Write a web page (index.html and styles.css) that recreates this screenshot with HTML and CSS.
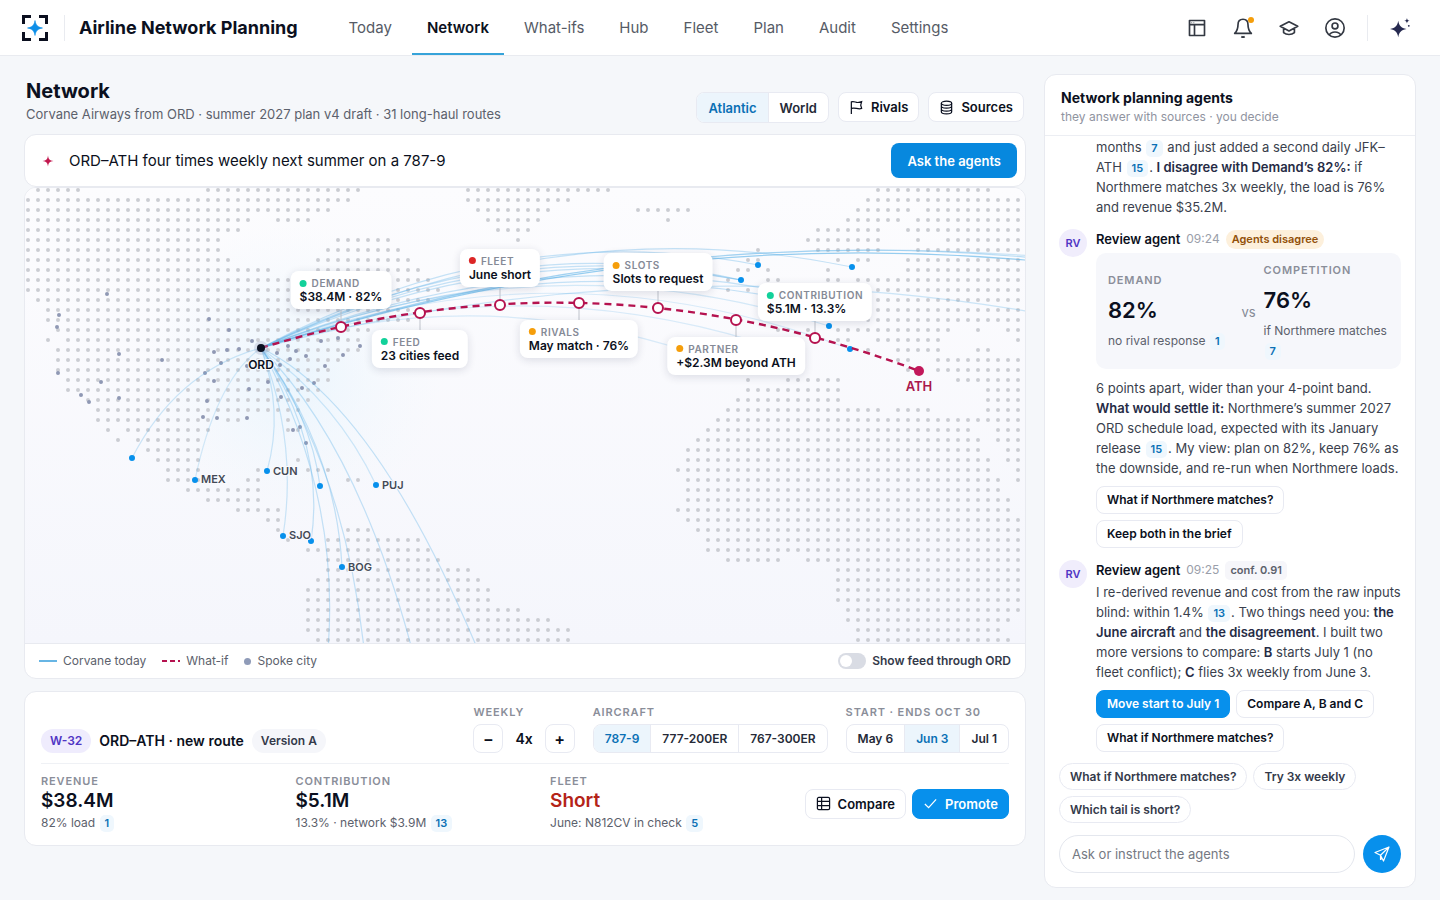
FILE: index.html
```html
<!DOCTYPE html>
<html lang="en">
<head>
<meta charset="utf-8">
<title>Airline Network Planning</title>
<link rel="stylesheet" href="styles.css">
</head>
<body>
<header class="topbar">
  <svg class="logo" viewBox="0 0 28 28" aria-hidden="true"><path d="M2.500 10V2.500H10M18 2.500h7.500V10M25.500 18v7.500H18M10 25.500H2.500V18" fill="none" stroke="#0b0f1f" stroke-width="3"/><path d="M14 6.500c.9 4.800 2.700 6.600 7.500 7.500-4.800.9-6.600 2.700-7.500 7.500-.9-4.800-2.700-6.600-7.500-7.500 4.800-.9 6.600-2.700 7.500-7.500z" fill="#0c8ee8" stroke="#0c8ee8" stroke-width=".6"/></svg>
  <span class="rule"></span>
  <span class="brand">Airline Network Planning</span>
  <nav class="nav" aria-label="Main">
    <a href="#">Today</a><a href="#" class="active" aria-current="page">Network</a><a href="#">What-ifs</a><a href="#">Hub</a><a href="#">Fleet</a><a href="#">Plan</a><a href="#">Audit</a><a href="#">Settings</a>
  </nav>
  <div class="tools">
    <button class="tool" aria-label="Layout"><svg viewBox="0 0 24 24"><path d="M3 3h18v18H3zM3 8h18M9 8v13"/><path d="M5.500 5.500h.6M8 5.500h.6" stroke-width="1.400"/></svg></button>
    <button class="tool" aria-label="Notifications"><svg viewBox="0 0 24 24"><path d="M12 1.500c-4 0-6 2.800-6 6.500 0 4.500-1 7.500-4 10.500h20c-3-3-4-6-4-10.500 0-3.700-2-6.500-6-6.500z"/><path d="M10 22.200c1.200 1 2.800 1 4 0"/></svg><span class="alert"></span></button>
    <button class="tool" aria-label="Learning"><svg viewBox="0 0 24 24"><path d="M12 4.500 1.500 10 12 15.500 22.500 10zM5.500 12.200v5.300c3.500 3 9.500 3 13 0v-5.300"/></svg></button>
    <button class="tool" aria-label="Account"><svg viewBox="0 0 24 24"><circle cx="12" cy="12" r="11"/><circle cx="12" cy="9.500" r="3.500"/><path d="M5 20.500c2.500-5 11.500-5 14 0"/></svg></button>
    <span class="rule"></span>
    <button class="tool spark" aria-label="Assistant"><svg viewBox="0 0 24 24"><path d="M9 3c1 5.600 2.900 7.700 9 9-6.100 1.300-8 3.400-9 9-1-5.600-2.900-7.700-9-9 6.100-1.300 8-3.400 9-9z"/><path d="M18.500 0c.4 2 1 2.600 3 3-2 .4-2.600 1-3 3-.4-2-1-2.600-3-3 2-.4 2.600-1 3-3z"/><circle cx="20.500" cy="8.500" r="1"/></svg></button>
  </div>
</header>

<main class="page">
  <section class="left">
    <div class="heading">
      <div>
        <h1>Network</h1>
        <p class="sub">Corvane Airways from ORD · summer 2027 plan v4 draft · 31 long-haul routes</p>
      </div>
      <div class="filters">
        <div class="segment large"><button class="on">Atlantic</button><button>World</button></div>
        <button class="btn"><svg viewBox="0 0 16 16"><path d="M2.500 15V2c3-1.500 5 1.500 8 .5l3-.8-1 3.800 1 3.500c-4 1.500-7-1.500-11 0"/></svg>Rivals</button>
        <button class="btn"><svg viewBox="0 0 16 16"><ellipse cx="8" cy="3.500" rx="5.500" ry="2.300"/><path d="M2.500 3.500v9c0 3 11 3 11 0v-9M2.500 6.500c0 3 11 3 11 0M2.500 9.500c0 3 11 3 11 0"/></svg>Sources</button>
      </div>
    </div>

    <form class="ask">
      <svg viewBox="0 0 12 12" aria-hidden="true"><path d="M6 .5c.5 3.900 1.600 5 5.500 5.500-3.900.5-5 1.600-5.500 5.500C5.500 7.600 4.400 6.500.5 6 4.400 5.500 5.500 4.400 6 .5z"/></svg>
      <input type="text" aria-label="Route idea" value="ORD–ATH four times weekly next summer on a 787-9">
      <button type="button">Ask the agents</button>
    </form>

    <div class="mapcard">
      <div class="map">
        <svg class="chart" viewBox="25 188 1000 455" role="img" aria-label="Route map from ORD">
          <defs><radialGradient id="glow" gradientUnits="userSpaceOnUse" cx="290" cy="375" r="150"><stop offset="0" stop-color="#e0f2fd" stop-opacity=".6"/><stop offset="1" stop-color="#eef8fe" stop-opacity="0"/></radialGradient></defs>
          <circle cx="290" cy="375" r="150" fill="url(#glow)"/>
          <path id="land" class="land"/>
          <path id="spokes" class="spokes"/>
          <g id="routes" class="routes"></g>
          <path id="cities" class="cities"/>
          <path class="stems" d="M341 310v13M420 317v13M500 288v13M579 307v13M658 291v13M736 324v13M815 321v13"/>
          <path class="whatif" d="M261 348Q590 247 919 371"/>
          <g class="nodes"><circle cx="341" cy="327" r="5"/><circle cx="420" cy="313" r="5"/><circle cx="500" cy="305" r="5"/><circle cx="579" cy="303" r="5"/><circle cx="658" cy="308" r="5"/><circle cx="736" cy="320" r="5"/><circle cx="815" cy="338" r="5"/></g>
          <circle cx="261" cy="348" r="7" class="halo"/><circle cx="261" cy="348" r="4" class="hub"/>
          <circle cx="919" cy="371" r="5" class="dest"/>
          <g class="names"><text x="201" y="483">MEX</text><text x="273" y="475">CUN</text><text x="382" y="489">PUJ</text><text x="289" y="539">SJO</text><text x="348" y="571">BOG</text></g>
          <text class="hubname" x="261" y="369">ORD</text>
          <text class="destname" x="919" y="391">ATH</text>
        </svg>
        <div class="tag t1"><span class="ok">DEMAND</span><b>$38.4M · 82%</b></div>
        <div class="tag t2"><span class="ok">FEED</span><b>23 cities feed</b></div>
        <div class="tag t3"><span class="bad">FLEET</span><b>June short</b></div>
        <div class="tag t4"><span class="warn">RIVALS</span><b>May match · 76%</b></div>
        <div class="tag t5"><span class="warn">SLOTS</span><b>Slots to request</b></div>
        <div class="tag t6"><span class="warn">PARTNER</span><b>+$2.3M beyond ATH</b></div>
        <div class="tag t7"><span class="ok">CONTRIBUTION</span><b>$5.1M · 13.3%</b></div>
      </div>
      <div class="legend">
        <span class="key line">Corvane today</span>
        <span class="key dash">What-if</span>
        <span class="key dot">Spoke city</span>
        <label class="switch"><input type="checkbox">Show feed through ORD</label>
      </div>
    </div>

    <div class="plan">
      <div class="planhead">
        <div class="ident"><span class="pill violet">W-32</span><h2>ORD–ATH · new route</h2><span class="pill">Version A</span></div>
        <div class="field"><span class="cap">Weekly</span><div class="stepper"><button aria-label="Fewer">−</button><b>4x</b><button aria-label="More">+</button></div></div>
        <div class="field"><span class="cap">Aircraft</span><div class="segment"><button class="on">787-9</button><button>777-200ER</button><button>767-300ER</button></div></div>
        <div class="field"><span class="cap">Start · ends Oct 30</span><div class="segment"><button>May 6</button><button class="on">Jun 3</button><button>Jul 1</button></div></div>
      </div>
      <div class="metrics">
        <div><span class="cap">Revenue</span><strong>$38.4M</strong><p>82% load <a class="ref" href="#">1</a></p></div>
        <div><span class="cap">Contribution</span><strong>$5.1M</strong><p>13.3% · network $3.9M <a class="ref" href="#">13</a></p></div>
        <div><span class="cap">Fleet</span><strong class="short">Short</strong><p>June: N812CV in check <a class="ref" href="#">5</a></p></div>
        <div class="actions">
          <button class="btn"><svg viewBox="0 0 16 16"><rect x="1.500" y="1.500" width="13" height="13" rx="1.500"/><path d="M1.500 5.800h13M1.500 10.200h13M6 1.500v13"/></svg>Compare</button>
          <button class="btn primary"><svg viewBox="0 0 16 16"><path d="m2 8.500 4 4 8-9"/></svg>Promote</button>
        </div>
      </div>
    </div>
  </section>

  <aside class="agents">
    <div class="agenthead"><h2>Network planning agents</h2><p>they answer with sources · you decide</p></div>
    <div class="feed">
      <article class="msg"><div class="body"><p>months <a class="ref" href="#">7</a> and just added a second daily JFK–ATH <a class="ref" href="#">15</a>. <b>I disagree with Demand’s 82%:</b> if Northmere matches 3x weekly, the load is 76% and revenue $35.2M.</p></div></article>
      <article class="msg">
        <span class="avatar">RV</span>
        <div class="body">
          <div class="who"><b>Review agent</b><time>09:24</time><span class="badge amber">Agents disagree</span></div>
          <div class="versus">
            <div><span class="cap">Demand</span><strong>82%</strong><p>no rival response <a class="ref" href="#">1</a></p></div>
            <span class="vs">vs</span>
            <div><span class="cap">Competition</span><strong>76%</strong><p>if Northmere matches <a class="ref" href="#">7</a></p></div>
          </div>
          <p>6 points apart, wider than your 4-point band. <b>What would settle it:</b> Northmere’s summer 2027 ORD schedule load, expected with its January release <a class="ref" href="#">15</a>. My view: plan on 82%, keep 76% as the downside, and re-run when Northmere loads.</p>
          <div class="choices"><button>What if Northmere matches?</button><button>Keep both in the brief</button></div>
        </div>
      </article>
      <article class="msg">
        <span class="avatar">RV</span>
        <div class="body">
          <div class="who"><b>Review agent</b><time>09:25</time><span class="badge">conf. 0.91</span></div>
          <p>I re-derived revenue and cost from the raw inputs blind: within 1.4% <a class="ref" href="#">13</a>. Two things need you: <b>the June aircraft</b> and <b>the disagreement</b>. I built two more versions to compare: <b>B</b> starts July 1 (no fleet conflict); <b>C</b> flies 3x weekly from June 3.</p>
          <div class="choices"><button class="primary">Move start to July 1</button><button>Compare A, B and C</button><button>What if Northmere matches?</button></div>
        </div>
      </article>
    </div>
    <div class="prompts"><button>What if Northmere matches?</button><button>Try 3x weekly</button><button>Which tail is short?</button></div>
    <form class="composer"><input type="text" aria-label="Message" placeholder="Ask or instruct the agents"><button type="button" aria-label="Send"><svg viewBox="0 0 16 16"><path d="M15 1 1 6.500l5.500 2.700L9.500 15zM15 1 6.500 9.200v4.300l1.800-1.800"/></svg></button></form>
  </aside>
</main>
<script src="map.js"></script>
</body>
</html>
```

FILE: map.js
```js
// Land mask: one entry per grid row, inclusive column runs.
const rows = [
  "1-5 18-33 44-58 85-96", "0-32 44-54 84-99", "0-30 45-52 61-66 83-88 90-99", "0-22 25-28 46-51 64 82-87 89-99",
  "0-21 47-50 79-85 88-99", "0-19 31-36 49 78-85 89 92-99", "0-19 30-37 73 79-85 89-99", "0-20 29-38 72-73 81 83-84 88-99",
  "0-24 29-39 71-72 74 80 88-99", "0-40 70 74-75 80-81 83-99", "0-41 70 72 85-99", "1-40 85-99",
  "2-38 85-99", "2-38 84-99", "3-34 75-76 78 81-92 95 98-99", "2 4-33 81-82 85-91 99",
  "3-33 84 87-91 95-96", "3-31 87-88 91-99", "3-30 88 91-99", "4-30 72 76-81 93-99",
  "4-29 72-81 96-99", "6-28 71-81 96-99", "7-27 70-85 87-90 96-99", "7-18 20-21 26 69-99",
  "8 10-18 26-27 68-94 97-99", "9 11-17 67-95 97-99", "12-17 66-95 98-99", "13-17 27 66-96 98-99",
  "14-17 23 28-30 65-96 99", "14-17 22-23 32-33 66-97 99", "16-23 66-97", "18-23 66-98",
  "21-25 65-98", "24-25 66-99", "25 32-34 67-99", "26 30-39 68-99",
  "28-40 68-99", "30-41 70-75 78-99", "30-44 81-99", "29-45 81-99",
  "28-46 81-99", "28-46 81-99", "28-49 82-99", "28-52 82-98",
  "28-54 83-97", "29-54 83-98"
];
const spokes = [[107,294],[59,315],[57,327],[209,319],[229,330],[119,354],[162,360],[214,352],[227,350],[239,349],[252,341],[221,363],[205,373],[214,381],[58,373],[101,382],[81,395],[89,402],[119,398],[207,401],[247,366],[249,389],[268,382],[281,397],[277,353],[280,365],[290,359],[288,346],[296,351],[306,356],[338,338],[321,341],[325,366],[343,355],[360,346],[314,383],[302,388],[203,417],[217,418],[247,418],[293,430],[300,427],[306,443]];
const cities = [[132,458],[195,480],[267,471],[320,486],[376,485],[283,536],[311,541],[342,567],[758,265],[741,280],[852,267],[829,326],[850,349]];
// Control point and end point of each arc, then its opacity.
const routes = [
  [556,206,852,267,.35],[510,216,758,265,.35],[501,226,741,280,.35],[501,232,741,280,.35],[501,238,741,280,.35],[520,243,775,290,.35],[510,250,770,296,.35],
  [705,207,1150,275,.65],[705,204,1150,272,.4],[660,216,1100,262,.3],[680,237,1100,325,.3],[545,235,829,326,.25],[555,238,850,349,.22],[509,267,757,342,.22],[475,282,690,352,.22],
  [177,371,132,458,.3],[216,380,195,480,.25],[284,411,267,471,.3],[298,442,283,536,.3],[326,445,311,541,.35],[311,415,320,486,.35],[336,450,342,567,.35],[338,404,376,485,.28],
  [358,525,318,720,.35],[364,495,370,740,.35],[382,470,437,760,.35],[398,414,520,760,.35]
];
const dots = list => list.map(([x, y]) => `M${x} ${y}h0`).join("");
const land = [];
rows.forEach((row, r) => row.split(" ").forEach(run => {
  const [a, b = a] = run.split("-").map(Number);
  for (let k = a; k <= b; k++) land.push([28 + 10 * k, 190 + 10 * r]);
}));
document.getElementById("land").setAttribute("d", dots(land));
document.getElementById("spokes").setAttribute("d", dots(spokes));
document.getElementById("cities").setAttribute("d", dots(cities));
document.getElementById("routes").innerHTML = routes.map(([cx, cy, x, y, o]) => `<path d="M261 348Q${cx} ${cy} ${x} ${y}" opacity="${o}"/>`).join("");
```

FILE: styles.css
```css
* { box-sizing: border-box; }
body { margin: 0; min-height: 100vh; display: flex; flex-direction: column; background: #f5f7fa; color: #0b1020; font: 13px/20px Inter, "Liberation Sans", sans-serif; }
h1, h2, p { margin: 0; }
button, input { font: inherit; color: inherit; }
button { cursor: pointer; }
a { text-decoration: none; }

.topbar { display: flex; align-items: center; height: 56px; padding: 0 28px 0 21px; background: #fff; border-bottom: 1px solid #e9ebf0; }
.logo { width: 28px; height: 28px; }
.rule { width: 1px; height: 26px; background: #e9ebf0; }
.logo + .rule { margin: 0 14px 0 15px; }
.brand { font-size: 18px; font-weight: 700; line-height: 24px; white-space: nowrap; }
.nav { display: flex; gap: 5px; align-self: stretch; margin-left: 36px; }
.nav a { display: flex; align-items: center; padding: 0 15px; color: #565b66; font-size: 15px; border-bottom: 2px solid transparent; border-top: 2px solid transparent; }
.nav .active { color: #0b1020; font-weight: 600; border-bottom-color: #36a3d9; }
.tools { display: flex; align-items: center; gap: 22px; margin-left: auto; }
.tool { position: relative; display: flex; width: 24px; height: 24px; padding: 2px; border: 0; background: none; }
.tool svg { width: 20px; height: 20px; fill: none; stroke: #333842; stroke-width: 2; stroke-linejoin: round; overflow: visible; }
.tools .rule { margin-right: -2px; margin-left: -2px; }
.alert { position: absolute; top: 1px; right: 1px; width: 6px; height: 6px; border-radius: 50%; background: #f59e0b; }
.tool.spark svg { width: 22px; height: 22px; fill: #262a50; stroke: none; }

.page { flex: 1; display: grid; grid-template-columns: minmax(0, 1fr) 372px; gap: 18px; padding: 18px 24px 12px; }
.left { display: flex; flex-direction: column; min-width: 0; }
.heading { display: flex; justify-content: space-between; align-items: flex-end; padding: 4px 2px 11px; }
h1 { font-size: 20px; line-height: 27px; }
.sub { color: #5c616c; line-height: 18px; }
.filters { display: flex; gap: 9px; }
.btn, .segment, .stepper button { border: 1px solid #e8eaf2; border-radius: 8px; background: #fff; }
.btn { display: flex; align-items: center; gap: 7px; height: 30px; padding: 0 10px; font-weight: 600; }
.btn svg { width: 15px; height: 15px; fill: none; stroke: currentColor; stroke-width: 1.3; }
.segment { display: flex; overflow: hidden; height: 29px; }
.segment button { border: 0; border-left: 1px solid #e8eaf2; background: none; padding: 0 11px; font-size: 12px; font-weight: 600; color: #252a37; }
.segment button:first-child { border-left: 0; }
.segment .on { background: #ecf5fc; color: #0a70b5; }
.segment.large { height: 31px; }
.large button { font-size: 13px; }

.ask { display: flex; align-items: center; height: 53px; padding: 0 8px 0 17px; border: 1px solid #e8eaf0; border-radius: 12px; background: #fff; }
.ask svg { width: 12px; height: 12px; fill: #c2184f; }
.ask input { flex: 1; min-width: 0; margin-left: 15px; padding: 0; border: 0; outline: 0; background: none; font-size: 15px; }
.ask button { height: 35px; padding: 0 16px; border: 0; border-radius: 8px; background: #0788de; color: #fff; font-size: 13px; font-weight: 600; }

.mapcard { border: 1px solid #e8eaf0; border-radius: 12px; overflow: hidden; background: #fff; }
.map { position: relative; background: linear-gradient(#fcfcfe, #f5f6fc); border-bottom: 1px solid #e8eaf0; }
.chart { display: block; width: 100%; }
.chart path { fill: none; stroke-linecap: round; }
.land { stroke: #cbcdd3; stroke-width: 4; }
.spokes { stroke: #8f98b4; stroke-width: 4; }
.cities { stroke: #0790ec; stroke-width: 6; }
.routes { stroke: #5fb3e8; stroke-width: 1.2; }
.stems { stroke: #c0c4cc; }
.chart .whatif { stroke: #b5124f; stroke-width: 2.4; stroke-dasharray: 7 5; stroke-linecap: butt; }
.nodes { fill: #fff; stroke: #b5124f; stroke-width: 2; }
.halo { fill: #9aa3bf; opacity: .3; }
.hub { fill: #0b1020; }
.dest { fill: #c2185b; }
.names { font-size: 11px; font-weight: 600; fill: #434956; }
.names text, .hubname, .destname { paint-order: stroke; stroke: #f9fafd; stroke-width: 2px; }
.hubname { font-size: 12px; font-weight: 600; fill: #0b1020; text-anchor: middle; }
.destname { font-size: 13px; font-weight: 600; fill: #a9174c; text-anchor: middle; }
.tag { position: absolute; transform: translateX(-50%); padding: 5px 9px; border-radius: 8px; background: #fff; box-shadow: 0 2px 8px #1c254a24; white-space: nowrap; font-size: 12px; line-height: 14px; }
.tag b { display: block; font-weight: 600; }
.tag span { display: flex; align-items: center; gap: 5px; color: #858a96; font-size: 10px; font-weight: 600; letter-spacing: .06em; }
.tag span::before { content: ""; width: 7px; height: 7px; border-radius: 50%; background: #f59e0b; }
.tag .ok::before { background: #12d19a; }
.tag .bad::before { background: #dc2626; }
.t1 { left: 31.6%; top: 18.3%; }
.t2 { left: 39.500%; top: 31.2%; }
.t3 { left: 47.500%; top: 13.4%; }
.t4 { left: 55.4%; top: 29%; }
.t5 { left: 63.3%; top: 14.3%; }
.t6 { left: 71.1%; top: 32.7%; }
.t7 { left: 79%; top: 20.9%; }
.legend { display: flex; align-items: center; gap: 16px; height: 34px; padding: 0 14px; font-size: 12px; color: #5c616c; }
.key { display: flex; align-items: center; gap: 6px; }
.key::before { content: ""; width: 18px; height: 2px; background: #67b5e4; }
.dash::before { background: repeating-linear-gradient(90deg, #b5124f 0 5px, transparent 5px 8px); }
.dot::before { width: 7px; height: 7px; border-radius: 50%; background: #8f9bb8; }
.switch { display: flex; align-items: center; gap: 6px; margin-left: auto; color: #343a4a; font-size: 12px; font-weight: 600; }
.switch input { appearance: none; width: 28px; height: 16px; margin: 0; padding: 2px; border-radius: 8px; background: #d9dce4; }
.switch input::before { content: ""; display: block; width: 12px; height: 12px; border-radius: 50%; background: #fff; }
.switch input:checked { background: #0790ec; }

.plan { margin-top: 12px; padding: 13px 16px 12px; border: 1px solid #e8eaf0; border-radius: 12px; background: #fff; }
.planhead { display: flex; align-items: flex-end; gap: 18px; padding-bottom: 10px; border-bottom: 1px solid #eff1f5; }
.ident { display: flex; align-items: center; gap: 8px; margin-right: auto; }
.ident h2 { font-size: 14px; line-height: 22px; font-weight: 600; }
.pill { padding: 2px 9px; border-radius: 12px; background: #f5f6fa; color: #343a4a; font-size: 12px; font-weight: 600; }
.violet { background: #efecfd; color: #4f35c4; }
.cap { display: block; color: #8a8e99; font-size: 11px; line-height: 14px; font-weight: 600; letter-spacing: .08em; text-transform: uppercase; }
.field .cap { margin-bottom: 5px; }
.stepper { display: flex; align-items: center; gap: 12px; }
.stepper button { width: 30px; height: 29px; padding: 0; font-size: 16px; font-weight: 600; }
.stepper b { font-size: 14px; font-weight: 600; }
.metrics { display: grid; grid-template-columns: 1fr 1fr 1fr auto; padding-top: 10px; }
.metrics strong { display: block; font-size: 19px; line-height: 25px; font-weight: 600; }
.metrics .short { color: #b42318; }
.metrics p { font-size: 12px; color: #5c616c; }
.actions { display: flex; align-items: center; gap: 6px; }
.btn.primary, .choices .primary { background: #0790ec; border-color: #0790ec; color: #fff; }
.ref { display: inline-block; margin: 0 1px; padding: 0 5px; border-radius: 5px; background: #eff7fd; color: #0a70b5; font-size: 11px; line-height: 17px; font-weight: 600; }

.agents { display: flex; flex-direction: column; border: 1px solid #e8eaf0; border-radius: 12px; background: #fff; }
.agenthead { padding: 13px 16px 9px; border-bottom: 1px solid #eceef3; }
.agenthead h2 { font-size: 14px; line-height: 20px; font-weight: 700; }
.agenthead p { color: #90949f; font-size: 12px; line-height: 18px; }
.feed { flex: 1; padding: 1px 14px 0; color: #3a3f4d; }
.msg { display: grid; grid-template-columns: 28px minmax(0, 1fr); gap: 9px; margin-bottom: 12px; }
.msg:last-child { margin-bottom: 11px; }
.body { grid-column: 2; }
.body b { color: #262b45; font-weight: 600; }
.avatar { width: 28px; height: 28px; border-radius: 50%; background: #f0edfc; color: #4f35c4; font-size: 11px; line-height: 28px; font-weight: 600; text-align: center; }
.avatar + .body { grid-row: 1; }
.who { display: flex; align-items: center; gap: 6px; margin-bottom: 2px; }
.who b { color: #0b1020; }
.who time { color: #9a9eaa; font-size: 12px; }
.badge { padding: 0 5px; border-radius: 5px; background: #f6f6fa; color: #5c616c; font-size: 11px; line-height: 19px; font-weight: 600; }
.amber { padding: 0 6px; border-radius: 10px; background: #fdf0dc; color: #92500a; }
.versus { display: grid; grid-template-columns: 1fr auto 1fr; align-items: center; gap: 8px; margin: 4px 0 9px; padding: 10px 12px 8px; border-radius: 10px; background: #f6f7fb; }
.versus strong { display: block; margin: 9px 0 7px; color: #0b1020; font-size: 22px; line-height: 28px; font-weight: 600; }
.versus p { font-size: 12px; color: #5c616c; }
.vs { color: #858a96; }
.choices, .prompts { display: flex; flex-wrap: wrap; gap: 6px; }
.choices { margin-top: 8px; }
.choices button, .prompts button { height: 28px; padding: 0 10px; border: 1px solid #e8eaf2; border-radius: 8px; background: #fff; color: #0b1020; font-size: 12px; font-weight: 600; }
.prompts { padding: 0 14px; }
.prompts button { height: 27px; border-radius: 14px; color: #343a4a; }
.composer { display: flex; align-items: center; gap: 8px; padding: 12px 14px 14px; }
.composer input { flex: 1; min-width: 0; height: 38px; padding: 0 12px; border: 1px solid #e4e7ee; border-radius: 19px; }
.composer input::placeholder { color: #757983; }
.composer button { display: grid; place-items: center; width: 38px; height: 38px; padding: 0; border: 0; border-radius: 50%; background: #0790ec; }
.composer svg { width: 16px; height: 16px; fill: none; stroke: #fff; stroke-width: 1.2; stroke-linejoin: round; }
```
